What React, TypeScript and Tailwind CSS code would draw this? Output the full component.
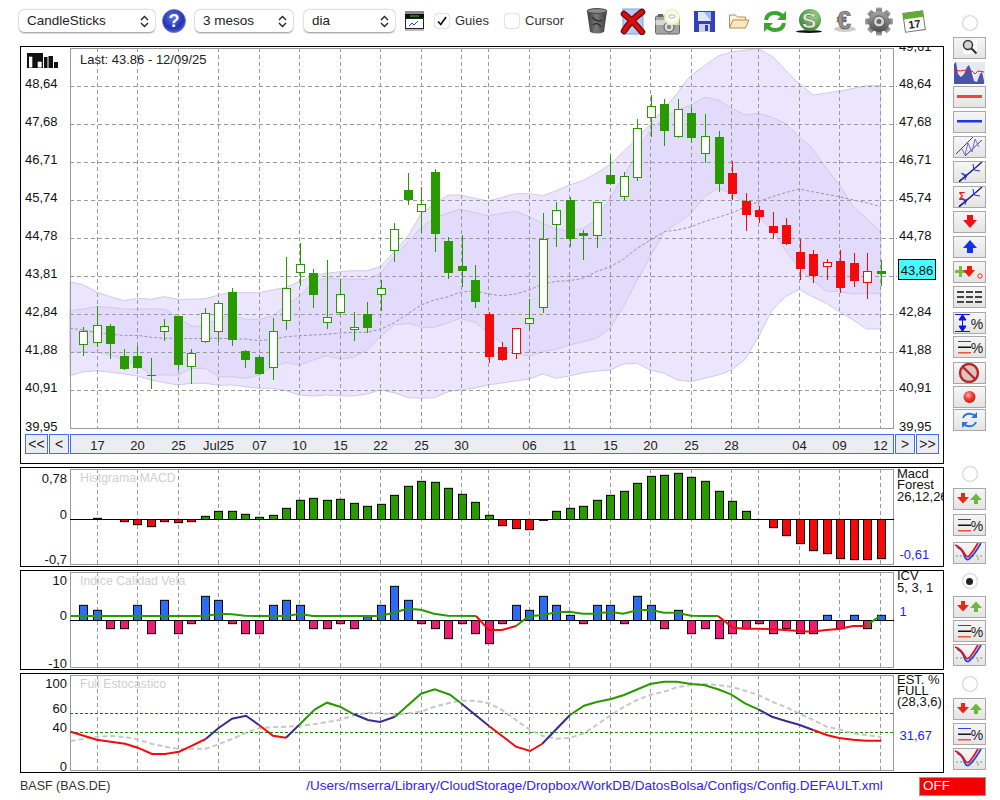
import type { ReactNode } from 'react';

type Pt = [number, number];

// zoom crops are 3x, these turn crop readings back into page pixels
const zoomed = (ox: number, oy: number, a: number[]): Pt[] => {
  const out: Pt[] = [];
  for (let i = 0; i < a.length; i += 2) out.push([ox + a[i] / 3, oy + a[i + 1] / 3]);
  return out;
};
const line = (p: Pt[]) => p.map(([x, y]) => `${x.toFixed(1)},${y.toFixed(1)}`).join(' ');

const GREEN = '#299900';
const RED = '#f40a0a';

const barX = (i: number) => Math.round(83.3 + 13.515 * i);

const gridX = [97, 137, 178, 218, 259, 299, 340, 380, 421, 461, 488, 529, 569, 610, 650, 691, 731, 758, 799, 839, 880];
const gridY = [86, 124, 162, 200, 238, 276, 314, 352, 390];
const priceLabels = ['48,64', '47,68', '46,71', '45,74', '44,78', '43,81', '42,84', '41,88', '40,91'];
const dates: [number, string][] = [
  [97, '17'], [137, '20'], [178, '25'], [218, 'Jul25'], [259, '07'], [299, '10'], [340, '15'], [380, '22'], [421, '25'], [461, '30'],
  [529, '06'], [569, '11'], [610, '15'], [650, '20'], [691, '25'], [731, '28'], [799, '04'], [839, '09'], [880, '12'],
];

// wick top, body top, body bottom, wick bottom, hollow
const candles: [number, number, number, number, number][] = [
  [327, 331, 345, 356, 1], [306, 325, 343, 347, 1], [324, 326, 344, 359, 0], [349, 356, 369, 370, 0], [346, 356, 368, 369, 0],
  [358, 375, 375, 389, 0], [319, 326, 332, 341, 1], [316, 316, 365, 370, 0], [349, 353, 367, 384, 1], [308, 313, 342, 343, 1],
  [301, 303, 332, 342, 1], [288, 292, 340, 346, 0], [350, 351, 360, 368, 0], [355, 357, 374, 375, 0], [318, 331, 368, 380, 1],
  [257, 288, 321, 330, 1], [243, 264, 273, 286, 1], [269, 273, 295, 308, 0], [260, 317, 323, 329, 1], [279, 294, 313, 315, 1],
  [312, 327, 330, 341, 1], [302, 314, 328, 333, 0], [280, 288, 295, 311, 1], [223, 229, 251, 262, 1], [173, 190, 200, 205, 0],
  [187, 204, 212, 233, 1], [169, 172, 234, 252, 0], [237, 241, 273, 279, 0], [235, 266, 271, 287, 0], [265, 280, 302, 308, 0],
  [312, 314, 357, 363, 0], [342, 347, 360, 361, 0], [328, 328, 354, 359, 1], [299, 318, 324, 330, 1], [213, 239, 308, 313, 1],
  [202, 210, 225, 247, 1], [197, 200, 239, 247, 0], [230, 233, 236, 260, 0], [202, 202, 236, 248, 1], [155, 175, 184, 185, 0],
  [172, 176, 197, 200, 1], [119, 128, 178, 181, 1], [95, 106, 118, 137, 1], [99, 104, 131, 146, 0], [99, 109, 137, 138, 1],
  [107, 113, 138, 143, 0], [114, 136, 154, 163, 1], [131, 137, 184, 192, 0], [161, 173, 194, 200, 0], [193, 201, 215, 231, 0],
  [206, 210, 217, 223, 0], [212, 226, 233, 239, 0], [218, 225, 244, 245, 0], [239, 252, 269, 280, 0], [250, 254, 276, 283, 0],
  [259, 262, 267, 280, 1], [250, 261, 288, 293, 0], [253, 263, 281, 287, 0], [253, 271, 283, 299, 1], [260, 271, 274, 286, 0],
];
const isRedCandle = (i: number) => (i >= 30 && i <= 32) || (i >= 48 && i <= 58);

const outerTop: Pt[] = [
  ...zoomed(20, 240, [150, 125, 190, 135, 232, 157, 271, 170, 313, 182, 352, 175, 394, 178, 433, 170, 475, 178, 514, 178, 556, 176, 595, 165, 637, 156, 676, 158, 718, 158, 757, 150, 799, 142, 838, 125, 880, 107, 919, 100, 961, 95, 1000, 92, 1042, 92, 1081, 80]),
  [394, 252], [408, 236], [421, 214], [434, 204], [448, 195],
  ...zoomed(460, 80, [0, 345, 46, 355, 85, 363, 127, 352, 166, 341, 208, 341, 248, 347, 289, 332, 328, 315, 370, 301, 409, 280, 451, 253, 490, 215, 532, 175, 571, 132, 613, 85, 652, 40, 680, 0]),
  [691.7, 75], [718, 56], [731.7, 52], [758, 48.5], [773, 57], [795, 80], [813, 95], [840, 91], [866.7, 85.7], [880.7, 85.7],
];
const outerBottom: Pt[] = [
  ...zoomed(20, 240, [150, 407, 190, 395, 232, 392, 271, 397, 313, 402, 352, 408, 394, 420, 433, 428, 475, 435, 514, 430, 556, 430, 595, 436, 637, 435, 676, 440, 718, 445, 757, 445, 799, 452, 838, 465, 880, 468, 919, 465, 961, 468, 1000, 468, 1042, 462, 1081, 450, 1123, 458, 1165, 473, 1204, 475, 1243, 473, 1285, 455, 1320, 450]),
  [475, 388], [488, 385], [502, 383], [515, 381],
  ...zoomed(460, 80, [208, 897, 248, 882, 289, 895, 328, 888, 370, 878, 409, 873, 451, 870, 490, 852, 532, 850, 571, 870, 613, 880, 652, 900, 694, 905, 733, 895, 775, 885, 814, 870, 856, 838, 895, 770, 937, 690, 976, 650, 1018, 628, 1057, 650, 1099, 670, 1138, 695, 1180, 720, 1219, 747, 1262, 747]),
];
const innerTop: Pt[] = [
  ...zoomed(20, 240, [150, 212, 190, 207, 232, 200, 271, 202, 313, 208, 352, 207, 394, 207, 433, 207, 475, 232, 514, 258, 556, 260, 595, 232, 637, 228, 676, 238, 718, 238, 757, 228, 799, 195, 838, 170, 880, 125, 919, 115, 961, 117, 1042, 118, 1081, 100]),
  [394, 257], [407, 243], [421, 228], [434, 218], [448, 213],
  ...zoomed(460, 80, [0, 388, 46, 398, 85, 407, 127, 400, 166, 394, 208, 410, 248, 430, 289, 447, 328, 453, 370, 445, 400, 425, 440, 370, 490, 290, 530, 220, 570, 150, 610, 115, 650, 90, 694, 75, 735, 52, 775, 60, 815, 85, 856, 105, 895, 100, 937, 112, 976, 130, 1018, 170, 1057, 205, 1099, 265, 1138, 315, 1180, 380, 1219, 415, 1262, 455]),
];
const innerBottom: Pt[] = [
  ...zoomed(20, 240, [150, 337, 190, 335, 232, 337, 271, 345, 313, 360, 352, 375, 394, 405, 433, 405, 475, 405, 514, 385, 556, 385, 595, 410, 637, 410, 676, 415, 718, 405, 757, 380, 799, 368, 838, 375, 880, 360, 919, 347, 961, 357, 1000, 352, 1042, 330, 1081, 290, 1123, 255, 1165, 250, 1204, 262, 1243, 262, 1285, 248, 1320, 235]),
  ...zoomed(460, 80, [46, 728, 85, 760, 127, 790, 166, 820, 208, 828, 248, 815, 289, 808, 328, 795, 370, 785, 409, 775, 451, 745, 490, 680, 532, 600, 571, 530, 613, 455, 652, 430, 694, 400, 733, 350, 775, 325, 814, 340, 856, 370, 895, 410, 937, 450, 976, 510, 1018, 565, 1057, 600, 1099, 633, 1138, 635, 1180, 642, 1219, 640, 1262, 640]),
];
const midLine: Pt[] = [
  ...zoomed(20, 240, [150, 265, 190, 270, 232, 278, 271, 282, 313, 287, 352, 286, 394, 292, 433, 295, 475, 295, 514, 296, 556, 295, 595, 295, 637, 296, 676, 297, 718, 302, 757, 298, 799, 290, 838, 287, 880, 285, 919, 283, 961, 279, 1000, 277, 1042, 277, 1081, 268, 1123, 248, 1165, 220, 1204, 195, 1243, 180, 1285, 170]),
  ...zoomed(460, 80, [0, 637, 46, 632, 85, 642, 127, 647, 166, 642, 208, 630, 248, 612, 289, 604, 328, 602, 370, 595, 409, 575, 451, 560, 490, 538, 532, 505, 571, 480, 613, 455, 652, 450, 694, 440, 733, 425, 775, 412, 814, 400, 856, 380, 895, 365, 937, 350, 976, 338, 1018, 327, 1057, 335, 1099, 343, 1138, 350, 1180, 360, 1219, 368, 1262, 380]),
];

// bar end in crop pixels, 0 = no bar
const macdEnds = [0, 295, 0, 305, 314, 320, 305, 308, 305, 289, 274, 274, 283, 292, 286, 265, 241, 235, 241, 238, 250, 259, 253, 226, 199, 184, 187, 205, 223, 247, 286, 317, 326, 329, 301, 274, 265, 259, 241, 226, 214, 190, 169, 166, 160, 172, 184, 214, 244, 274, 0, 323, 347, 371, 392, 401, 416, 419, 419, 416];
const icvEnds = [106, 121, 176, 176, 106, 191, 91, 191, 161, 79, 91, 161, 191, 191, 106, 91, 106, 176, 176, 161, 176, 139, 106, 49, 91, 161, 176, 206, 161, 191, 221, 161, 106, 121, 79, 106, 136, 161, 106, 106, 161, 79, 106, 176, 121, 191, 176, 206, 191, 176, 161, 191, 176, 191, 191, 136, 176, 136, 176, 136];

const icvGreen: Pt[][] = [
  [...zoomed(0, 570, [212, 138, 620, 138, 654, 131, 696, 133, 735, 137, 777, 138, 858, 138, 897, 132, 939, 138, 1101, 138, 1140, 138, 1182, 128, 1221, 116, 1263, 119, 1302, 131, 1344, 137]), ...zoomed(450, 570, [78, 138])],
  zoomed(450, 570, [198, 168, 237, 138, 276, 136, 318, 127, 357, 125, 399, 131, 438, 131, 480, 125, 519, 131, 561, 121, 600, 119, 642, 128, 681, 128, 723, 137, 762, 138, 804, 138]),
  zoomed(450, 570, [1248, 168, 1290, 137]),
];
const icvRed: Pt[][] = [
  zoomed(450, 570, [78, 138, 117, 180, 156, 180, 198, 168]),
  zoomed(450, 570, [804, 138, 849, 173, 885, 176, 924, 176, 966, 178, 1005, 180, 1047, 183, 1086, 185, 1128, 180, 1167, 177, 1209, 168, 1248, 168]),
];

const PURPLE = '#3c2a90';
const stochK: [string, Pt[]][] = [
  [RED, zoomed(0, 570, [212, 485, 290, 509, 332, 515, 375, 521, 413, 533, 456, 552, 495, 552, 537, 545, 570, 530, 617, 507])],
  [PURPLE, zoomed(0, 570, [617, 507, 655, 475, 696, 446, 738, 437, 777, 465])],
  [RED, zoomed(0, 570, [777, 465, 819, 497, 858, 503])],
  [PURPLE, zoomed(0, 570, [858, 503, 897, 465])],
  [GREEN, zoomed(0, 570, [897, 465, 945, 418, 981, 398, 1020, 410, 1062, 433])],
  [PURPLE, zoomed(0, 570, [1062, 433, 1104, 450, 1140, 456, 1185, 440])],
  [GREEN, [...zoomed(0, 570, [1185, 440, 1263, 371, 1304, 358]), ...zoomed(450, 570, [0, 374, 33, 400])]],
  [PURPLE, zoomed(450, 570, [33, 400, 117, 468])],
  [RED, zoomed(450, 570, [117, 468, 198, 530, 240, 543, 276, 522])],
  [PURPLE, zoomed(450, 570, [276, 522, 360, 435])],
  [GREEN, zoomed(450, 570, [360, 435, 402, 407, 440, 396, 483, 387, 522, 375, 600, 342, 642, 335, 681, 335, 723, 342, 762, 345, 804, 358, 843, 373, 885, 400, 925, 418])],
  [PURPLE, zoomed(450, 570, [925, 418, 966, 440, 1005, 452, 1047, 464, 1090, 480])],
  [RED, zoomed(450, 570, [1090, 480, 1130, 495, 1167, 504, 1209, 509, 1248, 512, 1294, 512])],
];
const stochD: Pt[] = [
  ...zoomed(0, 570, [212, 513, 290, 500, 332, 498, 375, 501, 413, 508, 456, 522, 495, 530, 537, 537, 617, 536, 655, 523, 696, 507, 738, 488, 777, 475, 819, 472, 897, 468, 945, 462, 981, 456, 1020, 450, 1062, 436, 1104, 428, 1140, 430, 1185, 434, 1263, 425, 1304, 410]),
  ...zoomed(450, 570, [0, 398, 33, 392, 75, 392, 117, 400, 156, 420, 198, 450, 240, 480, 276, 497, 318, 506, 360, 504, 402, 490, 440, 465, 483, 435, 522, 410, 561, 390, 600, 375, 642, 365, 681, 352, 723, 345, 762, 342, 804, 345, 843, 350, 885, 362, 925, 375, 966, 395, 1005, 410, 1047, 430, 1090, 450, 1130, 470, 1167, 478, 1209, 490, 1248, 495, 1294, 501]),
];

function Frame({ top, bottom, horizontal }: { top: number; bottom: number; horizontal?: boolean }) {
  return (
    <g>
      <rect x={70.5} y={top + 0.5} width={823} height={bottom - top} fill="none" stroke="#9a9a9a" />
      {horizontal && gridY.map((y) => <line key={y} x1={70} x2={897} y1={y + 0.5} y2={y + 0.5} stroke="#9a9a9a" strokeDasharray="4 3" />)}
      {gridX.map((x) => <line key={x} x1={x + 0.5} x2={x + 0.5} y1={top} y2={bottom} stroke="#9a9a9a" strokeDasharray="4 3" />)}
    </g>
  );
}

function Panel({ y, h, children }: { y: number; h: number; children: ReactNode }) {
  return (
    <svg width={922} height={h} viewBox={`21 ${y} 922 ${h}`} className="block overflow-hidden text-[13px]">
      {children}
    </svg>
  );
}

function MainChart() {
  return (
    <Panel y={47} h={387}>
      <polygon points={line([...outerTop, ...[...outerBottom].reverse()])} fill="#ebe6fd" stroke="#d0cae9" />
      <polygon points={line([...innerTop, ...[...innerBottom].reverse()])} fill="#e2dbfb" stroke="#d0cae9" />
      <polyline points={line(midLine)} fill="none" stroke="#9b93ab" strokeDasharray="3 2" />
      <Frame top={48} bottom={428} horizontal />
      {candles.map(([wt, bt, bb, wb, hollow], i) => {
        const c = isRedCandle(i) ? RED : GREEN;
        const x = barX(i);
        return (
          <g key={i}>
            <rect x={x} y={wt} width={1} height={wb - wt} fill={c} />
            {hollow ? (
              <rect x={x - 3.5} y={bt + 0.5} width={8} height={bb - bt - 1} fill="#fff" stroke={c} />
            ) : (
              <rect x={x - 4} y={bt} width={9} height={Math.max(bb - bt, 1)} fill={c} />
            )}
          </g>
        );
      })}
      <g>
        <rect x={27} y={53} width={16} height={15} fill="#111" />
        <rect x={29} y={56.7} width={3.3} height={10.8} fill="#fff" />
        <rect x={37.7} y={61.7} width={4} height={5.8} fill="#fff" />
        <rect x={44} y={57} width={3.5} height={11} fill="#111" />
        <rect x={48.5} y={56} width={4.5} height={12} fill="#111" />
        <rect x={54} y={62} width={4} height={6} fill="#111" />
      </g>
      <text x={80} y={63.5} fill="#222">Last: 43.86 - 12/09/25</text>
      {priceLabels.map((l, i) => (
        <g key={l} fill="#111">
          <text x={25} y={gridY[i] + 2}>{l}</text>
          {i !== 5 && <text x={899} y={gridY[i] + 2}>{l}</text>}
        </g>
      ))}
      <text x={899} y={51} fill="#111">49,61</text>
      <text x={25} y={431} fill="#111">39,95</text>
      <text x={899} y={431} fill="#111">39,95</text>
      <rect x={898.5} y={259.5} width={37} height={20} fill="#48fbff" stroke="#000" />
      <text x={917} y={274.5} fill="#111" textAnchor="middle">43,86</text>
    </Panel>
  );
}

function NavButton({ label, w }: { label: string; w: string }) {
  return (
    <div className={`flex h-5 items-center justify-center border border-[#3c6ff2] bg-[#ecedf2] text-[14px] text-[#222] ${w}`}>
      {label}
    </div>
  );
}

function Side({ lines, value, valueY, tops }: { lines: string[]; value: string; valueY: number; tops: number[] }) {
  return (
    <g>
      {lines.map((l, i) => <text key={l} x={897} y={tops[i]} fill="#111">{l}</text>)}
      <text x={899.5} y={valueY} fill="#2222ee">{value}</text>
    </g>
  );
}

function MacdChart() {
  return (
    <Panel y={468} h={98}>
      <Frame top={469} bottom={564} />
      <text x={80} y={482} fill="#cfcfcf" className="text-[12.3px]">Histgrama MACD</text>
      {macdEnds.map((end, i) => {
        if (!end) return null;
        const y = 420 + end / 3;
        const x = barX(i) - 3.5;
        return y < 519 ? (
          <rect key={i} x={x} y={y} width={8} height={519.5 - y} fill={GREEN} stroke="#000" />
        ) : (
          <rect key={i} x={x} y={519.5} width={8} height={y - 519.5} fill={RED} stroke="#000" />
        );
      })}
      <line x1={70} x2={894} y1={519.5} y2={519.5} stroke="#000" />
      <g fill="#111" textAnchor="end">
        <text x={67} y={482.5}>0,78</text>
        <text x={67} y={519}>0</text>
        <text x={67} y={564}>-0,7</text>
      </g>
      <Side lines={['Macd', 'Forest', '26,12,26']} tops={[477.5, 489, 500.5]} value="-0,61" valueY={558.5} />
    </Panel>
  );
}

function IcvChart() {
  return (
    <Panel y={571} h={98}>
      <Frame top={572} bottom={667} />
      <text x={80} y={585} fill="#cfcfcf" className="text-[12.3px]">Indice Calidad Vela</text>
      {icvEnds.map((end, i) => {
        const up = end < 151;
        const y = 570 + end / 3;
        const zero = 620.5;
        return (
          <rect key={i} x={barX(i) - 3.5} y={up ? y : zero} width={8} height={up ? zero - y : y - zero} fill={up ? '#2a6cf5' : '#f01b75'} stroke="#000" />
        );
      })}
      <line x1={70} x2={894} y1={620.5} y2={620.5} stroke="#000" />
      {icvGreen.map((p, i) => <polyline key={i} points={line(p)} fill="none" stroke={GREEN} strokeWidth={2} />)}
      {icvRed.map((p, i) => <polyline key={i} points={line(p)} fill="none" stroke={RED} strokeWidth={2} />)}
      <g fill="#111" textAnchor="end">
        <text x={67} y={585}>10</text>
        <text x={67} y={620}>0</text>
        <text x={67} y={667.5}>-10</text>
      </g>
      <Side lines={['ICV', '5, 3, 1']} tops={[580, 592]} value="1" valueY={615.5} />
    </Panel>
  );
}

function StochChart() {
  return (
    <Panel y={674} h={98}>
      <Frame top={675} bottom={770} />
      <text x={80} y={688} fill="#cfcfcf" className="text-[12.3px]">Full Estocastico</text>
      <line x1={70} x2={894} y1={713.5} y2={713.5} stroke="#e01010" strokeDasharray="3 2" />
      <line x1={70} x2={894} y1={732.5} y2={732.5} stroke="#1a8a00" strokeDasharray="3 2" />
      <polyline points={line(stochD)} fill="none" stroke="#c8c8c8" strokeWidth={2} strokeDasharray="5 3" />
      {stochK.map(([c, p], i) => <polyline key={i} points={line(p)} fill="none" stroke={c} strokeWidth={2} />)}
      <g fill="#111" textAnchor="end">
        <text x={67} y={688}>100</text>
        <text x={67} y={712.5}>60</text>
        <text x={67} y={732}>40</text>
        <text x={67} y={771}>0</text>
      </g>
      <Side lines={['EST. %', 'FULL', '(28,3,6)']} tops={[684, 695, 706]} value="31,67" valueY={740} />
    </Panel>
  );
}

function Box({ className, children }: { className: string; children: ReactNode }) {
  return <div className={`border border-black bg-white ${className}`}>{children}</div>;
}

function SelectBox({ label, w, ml }: { label: string; w: string; ml: string }) {
  return (
    <div className={`flex h-[22px] items-center justify-between rounded-[5px] bg-white pl-2 pr-[6px] text-[13.5px] text-[#222] shadow-[0_0.5px_2px_rgba(0,0,0,0.45)] ${w} ${ml}`}>
      <span>{label}</span>
      <svg width={9} height={13} viewBox="0 0 9 13" fill="none" stroke="#222" strokeWidth={1.4}>
        <path d="M1 5l3.5-3.5L8 5M1 8l3.5 3.5L8 8" />
      </svg>
    </div>
  );
}

function CheckBox({ checked, ml }: { checked?: boolean; ml: string }) {
  return (
    <div className={`flex h-[14px] w-[14px] items-center justify-center rounded-[3px] bg-white shadow-[0_0_1.5px_rgba(0,0,0,0.55)] ${ml}`}>
      {checked && (
        <svg width={12} height={12} viewBox="0 0 12 12" fill="none" stroke="#111" strokeWidth={1.7}>
          <path d="M2 6.5l2.8 3L10 2" />
        </svg>
      )}
    </div>
  );
}

function Toolbar() {
  return (
    <div className="flex h-[46px] items-center pb-1 -ml-px">
      <SelectBox label="CandleSticks" w="w-[136px]" ml="" />
      <svg width={24} height={24} viewBox="0 0 24 24" className="ml-[7px]">
        <defs>
          <radialGradient id="hlp" cx="0.45" cy="0.35" r="0.7">
            <stop offset="0" stopColor="#5f78e8" />
            <stop offset="0.65" stopColor="#2233b0" />
            <stop offset="1" stopColor="#5566dd" />
          </radialGradient>
        </defs>
        <circle cx={12} cy={12} r={11.5} fill="url(#hlp)" stroke="#6677cc" strokeWidth={0.8} />
        <text x={12} y={18} textAnchor="middle" fill="#fff" fontWeight={700} fontSize={18}>?</text>
      </svg>
      <SelectBox label="3 mesos" w="w-[98px]" ml="ml-[9px]" />
      <SelectBox label="dia" w="w-[91px]" ml="ml-[11px]" />
      <svg width={19} height={20} viewBox="0 0 19 20" className="ml-[10px]">
        <rect width={19} height={3} fill="#8a8a8a" />
        <rect y={3} width={19} height={4} fill="#111" />
        <path d="M5 4.5h9v1H5z" fill="#33cc33" />
        <rect x={0.5} y={7.5} width={18} height={10} fill="#fff" stroke="#222" />
        <polyline points="4,15 7,12 9,14 13,10" fill="none" stroke="#1b44cc" />
        <rect y={18} width={19} height={2} fill="#bbb" />
      </svg>
      <CheckBox checked ml="ml-[11px]" />
      <span className="ml-[6px] w-9 text-[13px] text-[#333]">Guies</span>
      <CheckBox ml="ml-[14px]" />
      <span className="ml-[6px] w-10 text-[13px] text-[#333]">Cursor</span>
      <svg width={22} height={26} viewBox="0 0 22 26" className="ml-[21px]">
        <defs>
          <linearGradient id="trs" x1="0" x2="1" y1="0" y2="0">
            <stop offset="0" stopColor="#3a3a3a" />
            <stop offset="0.45" stopColor="#7a7a7a" />
            <stop offset="1" stopColor="#3e3e3e" />
          </linearGradient>
        </defs>
        <path d="M1 3l3 21q7 3 14 0l3-21z" fill="url(#trs)" />
        <ellipse cx={11} cy={3} rx={10} ry={2.4} fill="#8c8c8c" stroke="#444" />
        <path d="M6 9q5 6 10 3M7 17q4-4 8 2" fill="none" stroke="#333" strokeWidth={1.5} />
      </svg>
      <svg width={26} height={27} viewBox="0 0 26 27" className="ml-3">
        <rect x={3} y={1} width={20} height={25} fill="#b4ccf4" stroke="#7d9fe0" />
        <path d="M4 6q9 7 18 18M22 4Q11 12 4 23" fill="none" stroke="#7a0808" strokeWidth={6.5} strokeLinecap="round" />
        <path d="M4 6q9 7 18 18M22 4Q11 12 4 23" fill="none" stroke="#d61010" strokeWidth={4} strokeLinecap="round" />
      </svg>
      <svg width={27} height={27} viewBox="0 0 27 27" className="ml-[9px]">
        <defs>
          <radialGradient id="glo">
            <stop offset="0.4" stopColor="#fff" />
            <stop offset="0.85" stopColor="#f6f2c2" />
            <stop offset="1" stopColor="#efe9a4" stopOpacity={0.3} />
          </radialGradient>
        </defs>
        <rect x={0.5} y={8} width={24} height={18} rx={1.5} fill="#a4a4a0" stroke="#666" />
        <rect x={3} y={6} width={5} height={3} fill="#666" />
        <rect x={0.5} y={12} width={24} height={5} fill="#d8d8d0" />
        <circle cx={14} cy={19} r={5} fill="#ddd" stroke="#555" />
        <circle cx={14} cy={19} r={2.2} fill="#888" />
        <circle cx={17} cy={9} r={8.5} fill="url(#glo)" />
        <rect x={14} y={7} width={6} height={3} rx={1} fill="#fff" stroke="#888" strokeWidth={0.6} />
      </svg>
      <svg width={21} height={21} viewBox="0 0 21 21" className="ml-3">
        <rect width={21} height={21} fill="#3440b8" />
        <rect x={4} y={1} width={13} height={9} fill="#dfe8fb" />
        <path d="M10 1h7v9z" fill="#9db9ee" />
        <rect x={5} y={13} width={11} height={8} fill="#cfd2dc" />
        <rect x={11} y={14} width={3} height={6} fill="#3440b8" />
      </svg>
      <svg width={22} height={16} viewBox="0 0 22 16" className="ml-[13px]" fill="#fdf2de" stroke="#b98a4f">
        <path d="M1.5 15V2h6l2 2h8v3" />
        <path d="M1.5 15l3.5-8h16l-3.5 8z" fill="#fbe6c2" />
      </svg>
      <svg width={24} height={23} viewBox="0 0 24 23" className="ml-[13px]" fill="none" stroke="#3aa62e" strokeWidth={4}>
        <path d="M3 10q1-7 9-7 5 0 8 4" />
        <path d="M21 13q-1 7-9 7-5 0-8-4" />
        <path d="M23 1v9h-9zM1 22v-9h9z" fill="#3aa62e" stroke="none" />
      </svg>
      <svg width={26} height={24} viewBox="0 0 26 24" className="ml-[9px]">
        <defs>
          <radialGradient id="dol" cx="0.65" cy="0.3" r="0.8">
            <stop offset="0" stopColor="#9bd88a" />
            <stop offset="1" stopColor="#2f7f2a" />
          </radialGradient>
        </defs>
        <ellipse cx={13} cy={22.5} rx={13} ry={1.5} fill="#111" />
        <circle cx={14} cy={11} r={11} fill="url(#dol)" />
        <text x={13} y={19} textAnchor="middle" fontSize={22} fontWeight={700} fill="#e6e6dc" stroke="#555" strokeWidth={0.4}>S</text>
      </svg>
      <svg width={25} height={24} viewBox="0 0 25 24" className="ml-[10px]">
        <ellipse cx={13} cy={20} rx={11} ry={3} fill="#aaa" opacity={0.6} />
        <text x={12} y={20} textAnchor="middle" fontSize={25} fontWeight={700} fill="#9a9393" stroke="#4a4444" strokeWidth={0.6}>€</text>
      </svg>
      <svg width={28} height={29} viewBox="0 0 28 29" className="ml-2">
        <defs>
          <linearGradient id="gr" x1="0" x2="0" y1="0" y2="1">
            <stop offset="0" stopColor="#a8a8a8" />
            <stop offset="1" stopColor="#4e4e4e" />
          </linearGradient>
        </defs>
        <g fill="url(#gr)">
          {[0, 45, 90, 135, 180, 225, 270, 315].map((a) => (
            <rect key={a} x={11} y={0.5} width={6} height={7} rx={1} transform={`rotate(${a} 14 14.5)`} />
          ))}
          <circle cx={14} cy={14.5} r={10.5} />
        </g>
        <circle cx={14} cy={14.5} r={5.5} fill="#d8d8d8" stroke="#555" />
        <circle cx={14} cy={14.5} r={2.5} fill="#666" />
      </svg>
      <svg width={24} height={24} viewBox="0 0 24 24" className="ml-[9px]">
        <g transform="rotate(-8 12 12)">
          <rect x={2} y={3} width={20} height={19} fill="#fff" stroke="#777" />
          <rect x={2} y={3} width={20} height={6} fill="#5fae33" />
          <text x={12} y={19} textAnchor="middle" fontSize={11} fontWeight={700} fill="#222">17</text>
        </g>
      </svg>
    </div>
  );
}

function Radio({ mt, on }: { mt: string; on?: boolean }) {
  return (
    <div className={`flex h-[14px] w-[14px] items-center justify-center self-center rounded-full bg-white shadow-[0_0_2px_rgba(0,0,0,0.55)] ${mt}`}>
      {on && <div className="h-[7px] w-[7px] rounded-full bg-[#222]" />}
    </div>
  );
}

function Tool({ mt, children }: { mt: string; children: ReactNode }) {
  return (
    <div className={`h-[22px] w-[33px] border border-[#a8a8a8] bg-gradient-to-b from-[#f6f6f6] to-[#e4e4e4] ${mt}`}>
      <svg width={31} height={20} viewBox="1 1 31 20" className="block">{children}</svg>
    </div>
  );
}

const Percent = () => <text x={24} y={17} textAnchor="middle" fontSize={14} fill="#222">%</text>;
const LinesPercent = () => (
  <g>
    <rect x={5} y={5} width={13} height={1} fill="#2244ee" />
    <rect x={5} y={10.5} width={13} height={1.5} fill="#111" />
    <rect x={5} y={16} width={13} height={1.5} fill="#ee5533" />
    <Percent />
  </g>
);
const Curves = () => (
  <g fill="none" strokeWidth={1.8}>
    <path d="M3 14h26" stroke="#3a9a2a" strokeWidth={0.8} strokeDasharray="2 2" />
    <path d="M25 15v3" stroke="#888" strokeWidth={0.8} />
    <path d="M4 5q5 2 7 8 2 6 5 4 5-4 12-16" stroke="#2244ee" />
    <path d="M2 3q6 2 9 8 3 6 6 2 4-5 8-12" stroke="#ee1111" />
  </g>
);
const RedDown = ({ x = 10 }: { x?: number }) => <path d={`M${x - 2} 5h4v4h4l-6 6.5-6-6.5h4z`} fill="#e8261a" />;
const GreenUp = ({ x = 23 }: { x?: number }) => <path d={`M${x - 2} 16v-4h-4l6-6.5 6 6.5h-4v4z`} fill="#6cb93a" />;
const Arrows = () => <path d="M6 20L28 2M8 12l5 2-1 5M9 13l5 3M20 3l1 6 6 1" fill="none" stroke="#2233dd" strokeWidth={1} />;

function SideColumn() {
  return (
    <div className="ml-[9px] flex w-[33px] flex-col">
      <Radio mt="mt-4" />
      <Tool mt="mt-[7px]">
        <rect x={10} y={3} width={14} height={14} fill="#fff" />
        <circle cx={15} cy={8} r={4.5} fill="#cfd4d8" stroke="#333" strokeWidth={1.4} />
        <path d="M18.5 11.5l5 5" stroke="#333" strokeWidth={2.2} />
      </Tool>
      <div className="mt-[3px] h-[22px] w-[33px]">
        <svg width={33} height={22} viewBox="0 0 33 22" className="block">
          <rect x={1} width={31} height={22} fill="#e8e8f4" />
          <path d="M1 22V2l2-2 2 12 3 3 3-3 3-7 2-2 2 5 3 11 3 1 3-8 2-2 2 9v3z" fill="#4b55a8" />
          <path d="M2 8l5 1 5-1 4 2 3-1 3 3 3-3 6 1" fill="none" stroke="#e32222" strokeWidth={1} />
        </svg>
      </div>
      <Tool mt="mt-[2px]"><rect x={4} y={9} width={25} height={3} fill="#ee4444" /></Tool>
      <Tool mt="mt-[3px]"><rect x={4} y={9} width={25} height={2.5} fill="#2233ee" /></Tool>
      <Tool mt="mt-[3px]">
        <path d="M3 18L20 1M12 20L29 4" fill="none" stroke="#444" />
        <path d="M9 13l3 6 3-12 4 9 3-13 4 8" fill="none" stroke="#7766ee" />
      </Tool>
      <Tool mt="mt-[3px]">
        <path d="M6 21L29 1" stroke="#111" strokeWidth={1.2} />
        <Arrows />
      </Tool>
      <Tool mt="mt-[3px]">
        <path d="M6 21L29 1" stroke="#111" strokeWidth={1.2} />
        <Arrows />
        <text x={9} y={14} textAnchor="middle" fontSize={11} fontWeight={700} fill="#e21a1a">Σ</text>
      </Tool>
      <Tool mt="mt-[3px]"><path d="M14 4h6v5h4l-7 8-7-8h4z" fill="#ee1111" /></Tool>
      <Tool mt="mt-[3px]"><path d="M14 17v-5h-4l7-8 7 8h-4v5z" fill="#1133ee" /></Tool>
      <Tool mt="mt-[3px]">
        <path d="M6 5h3v4h4v3H9v4H6v-4H2V9h4z" fill="#77bb44" />
        <path d="M14 5h5v4h3l-6 7-6-7h4z" fill="#ee1c11" />
        <circle cx={27} cy={15} r={2.2} fill="#fff" stroke="#ee1c11" />
      </Tool>
      <Tool mt="mt-[3px]">
        <g fill="#444">
          {[5, 10, 15].map((y) => (
            <g key={y}>
              <rect x={4} y={y} width={7} height={2} />
              <rect x={13} y={y} width={7} height={2} />
              <rect x={22} y={y} width={7} height={2} />
            </g>
          ))}
        </g>
      </Tool>
      <Tool mt="mt-[4px]">
        <path d="M2 2.5h15M2 19.5h15" stroke="#1111ee" strokeWidth={1.2} />
        <path d="M9.5 3v16M9.5 2.5L6 8h7zM9.5 19.5L6 14h7z" fill="#1111ee" stroke="#1111ee" />
        <Percent />
      </Tool>
      <Tool mt="mt-[2px]"><LinesPercent /></Tool>
      <Tool mt="mt-[4px]">
        <circle cx={16} cy={11} r={9} fill="#e1c2c2" stroke="#b02a2a" strokeWidth={2.4} />
        <path d="M10 5l12 12" stroke="#b02a2a" strokeWidth={2.4} />
      </Tool>
      <Tool mt="mt-[2px]">
        <defs>
          <radialGradient id="rec" cx="0.4" cy="0.35" r="0.7">
            <stop offset="0" stopColor="#ffb0b0" />
            <stop offset="0.5" stopColor="#f23a3a" />
            <stop offset="1" stopColor="#cc1818" />
          </radialGradient>
        </defs>
        <circle cx={16.5} cy={11} r={6} fill="url(#rec)" />
      </Tool>
      <Tool mt="mt-px">
        <g fill="none" stroke="#2f74d8" strokeWidth={2}>
          <path d="M10 9q2-5 8-4 3 0 4 2" />
          <path d="M23 13q-2 5-8 4-3 0-4-2" />
        </g>
        <path d="M24 3v6h-6zM9 19v-6h6z" fill="#2f74d8" />
      </Tool>
      <Radio mt="mt-9" />
      <Tool mt="mt-[7px]"><RedDown /><GreenUp /></Tool>
      <Tool mt="mt-1"><LinesPercent /></Tool>
      <Tool mt="mt-[6px]"><Curves /></Tool>
      <Radio mt="mt-[10px]" on />
      <Tool mt="mt-2"><RedDown /><GreenUp /></Tool>
      <Tool mt="mt-[2px]"><LinesPercent /></Tool>
      <Tool mt="mt-[2px]"><Curves /></Tool>
      <Radio mt="mt-[11px]" />
      <Tool mt="mt-[7px]"><RedDown /><GreenUp /></Tool>
      <Tool mt="mt-[3px]"><LinesPercent /></Tool>
      <Tool mt="mt-[3px]"><Curves /></Tool>
    </div>
  );
}

export default function App() {
  return (
    <div className="h-[800px] w-[1000px] overflow-hidden bg-white font-['Liberation_Sans',Arial,sans-serif]">
      <div className="flex">
        <div className="w-[924px] ml-5">
          <Toolbar />
          <div className="flex flex-col gap-[3px]">
            <Box className="h-[418px]">
              <MainChart />
              <div className="flex gap-px px-1">
                <NavButton label="<<" w="w-[23px]" />
                <NavButton label="<" w="w-5" />
                <div className="h-5 w-[824px] border border-[#3c6ff2] bg-[#ecedf2]">
                  <svg width={822} height={18} viewBox="71 435 822 18" className="block text-[13px]">
                    {dates.map(([x, d]) => (
                      <text key={x + d} x={x + 0.5} y={449.5} textAnchor="middle" fill="#222">{d}</text>
                    ))}
                  </svg>
                </div>
                <NavButton label=">" w="w-5" />
                <NavButton label=">>" w="w-[23px]" />
              </div>
            </Box>
            <Box className="h-[100px]"><MacdChart /></Box>
            <Box className="h-[100px]"><IcvChart /></Box>
            <Box className="h-[100px]"><StochChart /></Box>
          </div>
        </div>
        <SideColumn />
      </div>
      <div className="flex items-center pl-5 pt-[3px]">
        <span className="text-[12.5px] text-[#333]">BASF (BAS.DE)</span>
        <span className="ml-[196px] text-[13.5px] text-[#3322ee]">/Users/mserra/Library/CloudStorage/Dropbox/WorkDB/DatosBolsa/Configs/Config.DEFAULT.xml</span>
        <div className="ml-auto mr-[14px] flex h-[19px] w-[67px] items-center border border-[#999] bg-[#f40000] pl-[3px] text-[13.5px] text-white">OFF</div>
      </div>
    </div>
  );
}
